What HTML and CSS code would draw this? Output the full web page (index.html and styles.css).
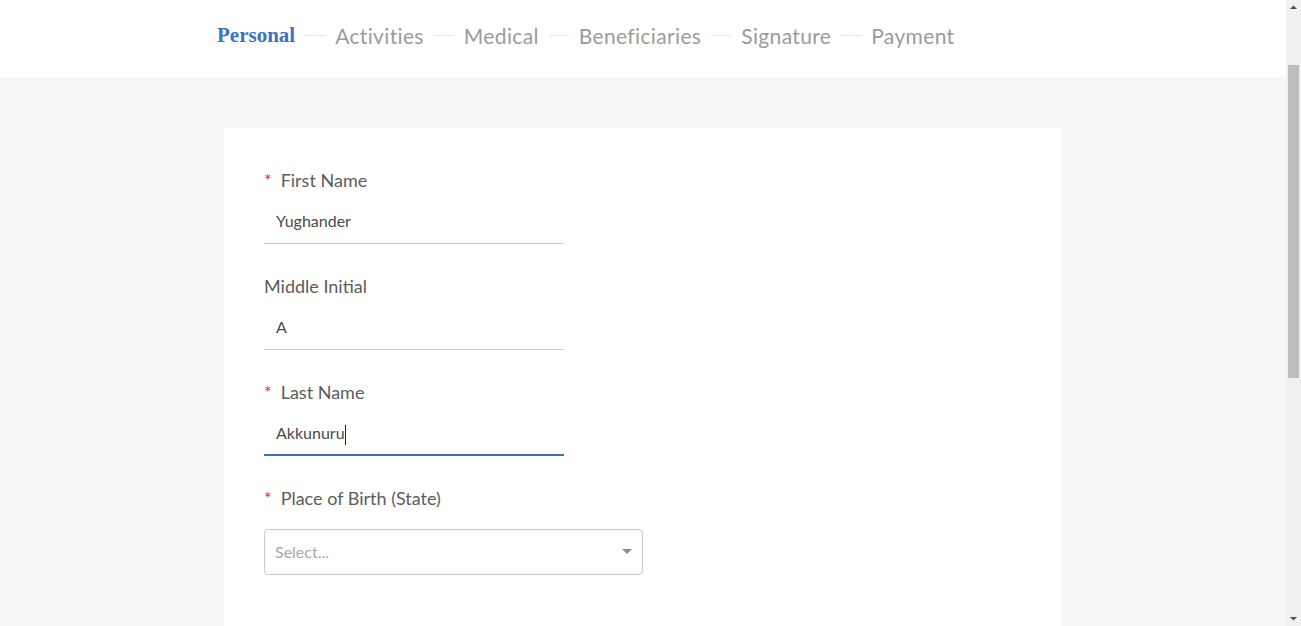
FILE: index.html
```html
<!DOCTYPE html>
<html lang="en">
<head>
<meta charset="utf-8">
<title>Enrollment</title>
<link rel="stylesheet" href="styles.css">
</head>
<body>
<div class="viewport">
  <div class="page">
    <header class="topbar">
      <nav class="steps">
        <span class="step step-active">Personal</span>
        <span class="sep"></span>
        <span class="step">Activities</span>
        <span class="sep"></span>
        <span class="step">Medical</span>
        <span class="sep"></span>
        <span class="step">Beneficiaries</span>
        <span class="sep"></span>
        <span class="step">Signature</span>
        <span class="sep"></span>
        <span class="step">Payment</span>
      </nav>
    </header>
    <main class="content">
      <form class="card">
        <div class="field">
          <label class="label"><span class="req">*</span>First Name</label>
          <div class="input">Yughander</div>
        </div>
        <div class="field">
          <label class="label">Middle Initial</label>
          <div class="input">A</div>
        </div>
        <div class="field">
          <label class="label"><span class="req">*</span>Last Name</label>
          <div class="input input-focus">Akkunuru<span class="caret"></span></div>
        </div>
        <div class="field">
          <label class="label"><span class="req">*</span>Place of Birth (State)</label>
          <div class="select">
            <span class="placeholder">Select...</span>
            <svg class="arrow" width="10" height="5" viewBox="0 0 10 5"><path d="M0 0h10L5 5z" fill="#8c8c8c"/></svg>
          </div>
        </div>
      </form>
    </main>
  </div>
  <div class="scrollbar" aria-hidden="true">
    <svg class="sb-btn" width="15" height="15" viewBox="0 0 15 15"><path d="M4 9h7L7.5 5.5z" fill="#505050"/></svg>
    <div class="sb-track"><div class="sb-thumb"></div></div>
    <svg class="sb-btn" width="15" height="15" viewBox="0 0 15 15"><path d="M4 6h7L7.5 9.5z" fill="#505050"/></svg>
  </div>
</div>
</body>
</html>
```
FILE: styles.css
```css
html, body {
  margin: 0;
  padding: 0;
}
body {
  background: #f6f6f6;
  font-family: "Lato", "Open Sans", sans-serif;
  color: #595959;
}
.viewport {
  display: flex;
  height: 100vh;
  overflow: hidden;
}
.page {
  flex: 1;
  min-width: 0;
}
.topbar {
  background: #fff;
  height: 77px;
}
.steps {
  display: flex;
  align-items: center;
  padding-left: 217px;
  height: 71px;
  gap: 10px;
}
.step {
  font-size: 21px;
  letter-spacing: 0.35px;
  color: #9b9b9b;
}
.step-active {
  font-family: "Liberation Serif", serif;
  font-weight: bold;
  letter-spacing: 0;
  color: #3a72c5;
}
.sep {
  width: 20px;
  height: 1px;
  background: #e4e4e4;
}
.content {
  padding-top: 51px;
  padding-left: 224px;
}
.card {
  background: #fff;
  width: 758px;
  padding: 40px 40px 60px;
  display: flex;
  flex-direction: column;
  gap: 30px;
}
.field {
  display: flex;
  flex-direction: column;
  gap: 13px;
}
.label {
  font-size: 18px;
  color: #5c5c5c;
  line-height: 24px;
}
.req {
  color: #f5222d;
  margin-right: 9px;
  font-size: 18px;
}
.input {
  box-sizing: border-box;
  width: 300px;
  height: 39px;
  padding: 0 0 6px 12px;
  line-height: 32px;
  border-bottom: 1px solid #c8c8c8;
  font-size: 16px;
  color: #4a4a4a;
}
.input-focus {
  border-bottom: 2px solid #3a6fba;
}
.caret {
  display: inline-block;
  width: 1px;
  height: 20px;
  background: #222;
  vertical-align: middle;
}
.select {
  box-sizing: border-box;
  width: 379px;
  height: 46px;
  border: 1px solid #c8c8c8;
  border-radius: 4px;
  display: flex;
  align-items: center;
  justify-content: space-between;
  padding: 0 10px 2px;
  margin-top: 6px;
}
.placeholder {
  color: #a8a8a8;
  font-size: 16px;
}
.scrollbar {
  width: 15px;
  flex: none;
  background: #f1f1f1;
  display: flex;
  flex-direction: column;
}
.sb-btn {
  display: block;
  flex: none;
}
.sb-track {
  flex: 1;
  padding: 50px 2px 0;
}
.sb-thumb {
  height: 313px;
  background: #bdbdbd;
}
```
